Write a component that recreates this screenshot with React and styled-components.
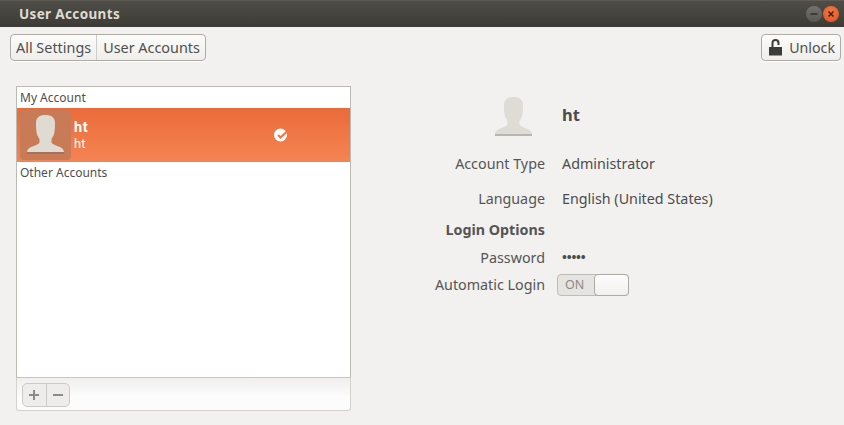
import React from 'react';
import styled, { createGlobalStyle } from 'styled-components';

const GlobalStyle = createGlobalStyle`
  html, body { margin: 0; padding: 0; }
  body {
    width: 844px;
    height: 425px;
    overflow: hidden;
    background: #f2f1f0;
    font-family: "Noto Sans", "Open Sans", sans-serif;
    font-size: 14.3px;
    color: #4c4c4c;
  }
`;

const Window = styled.div`
  width: 844px;
  height: 425px;
  display: flex;
  flex-direction: column;
`;

const TitleBar = styled.div`
  height: 27px;
  flex: none;
  display: flex;
  align-items: center;
  justify-content: space-between;
  padding: 0 5px 0 19px;
  box-sizing: border-box;
  background: linear-gradient(#504d47, #3c3b37);
  border-top: 1px solid #5e5b55;
`;

const Title = styled.div`
  font-size: 13.5px;
  font-weight: 700;
  letter-spacing: 0.35px;
  color: #dfdbd2;
`;

const WindowButtons = styled.div`
  display: flex;
  gap: 1px;
`;

const WindowButton = styled.div`
  width: 16px;
  height: 16px;
  border-radius: 50%;
  display: flex;
  align-items: center;
  justify-content: center;
  background: ${p => (p.$close ? 'radial-gradient(circle at 50% 35%, #f07a45, #e2501e)' : 'linear-gradient(#73726d, #585752)')};
`;

const Toolbar = styled.div`
  height: 59px;
  flex: none;
  display: flex;
  justify-content: space-between;
  align-items: flex-start;
  padding: 7px 3px 0 10px;
  box-sizing: border-box;
`;

const ButtonGroup = styled.div`
  display: flex;
  height: 27px;
  box-sizing: border-box;
  border: 1px solid #aeaaa4;
  border-radius: 4px;
  background: linear-gradient(#fbfbfa, #efeeec);
  box-shadow: 0 1px 0 #fff;
`;

const CrumbButton = styled.div`
  display: flex;
  align-items: center;
  gap: 7px;
  padding: 0 5px 0 ${p => (p.$first ? '5px' : '6px')};
  font-size: 14.4px;
  color: #4f4f4f;
  & + & { border-left: 1px solid #cfccc8; }
`;

const UnlockButton = styled(CrumbButton)`
  padding-left: 7px;
  font-size: 14.2px;
`;

const Main = styled.div`
  flex: 1;
  display: flex;
  padding-left: 16px;
`;

const AccountsPanel = styled.div`
  width: 335px;
  height: 325px;
  flex: none;
  display: flex;
  flex-direction: column;
`;

const AccountList = styled.div`
  height: 292px;
  flex: none;
  box-sizing: border-box;
  background: #fff;
  border: 1px solid #bdb9b3;
  border-bottom-color: #c8c5c0;
`;

const GroupHeading = styled.div`
  height: 21px;
  padding-left: 3px;
  font-size: 12px;
  line-height: 21px;
  color: #4f4f4f;
`;

const AccountRow = styled.div`
  height: 54px;
  display: flex;
  align-items: center;
  background: linear-gradient(#ea6b39, #f58454);
  color: #fff;
`;

const AvatarTile = styled.div`
  width: 51px;
  height: 50px;
  margin-left: 3px;
  flex: none;
  border-radius: 4px;
  background: #c97a57;
  display: flex;
  align-items: center;
  justify-content: center;
`;

const AccountText = styled.div`
  margin-left: 3px;
  padding-top: 2px;
  width: 200px;
  display: flex;
  flex-direction: column;
  font-family: Roboto, "Noto Sans", sans-serif;
  font-size: 13px;
  line-height: 16.5px;
`;

const AccountName = styled.span`
  font-weight: 700;
  font-size: 14.5px;
  letter-spacing: 0.6px;
`;

const ListFooter = styled.div`
  flex: 1;
  box-sizing: border-box;
  padding: 5px 0 0 5px;
  border: 1px solid #d5d2ce;
  border-top: 0;
  border-radius: 0 0 3px 3px;
  background: linear-gradient(#f0efee, #fcfcfc 60%);
`;

const SmallGroup = styled.div`
  width: 48px;
  height: 24px;
  box-sizing: border-box;
  display: flex;
  border: 1px solid #cdcac6;
  border-radius: 5px;
  background: #eeedeb;
`;

const SmallButton = styled.div`
  flex: 1;
  display: flex;
  align-items: center;
  justify-content: center;
  & + & { border-left: 1px solid #cdcac6; }
`;

const Details = styled.div`
  display: grid;
  grid-template-columns: 194px auto;
  grid-template-rows: 50px 48px 22px 40px 16px 38px;
  column-gap: 12px;
  align-items: center;
  align-content: start;
  padding-top: 3px;
  height: max-content;
`;

const Label = styled.div`
  text-align: right;
  font-size: 14.3px;
  color: #555;
  font-weight: ${p => (p.$bold ? 700 : 400)};
`;

const Value = styled.div`
  padding-left: 5px;
  font-size: 14.3px;
  color: #4c4c4c;
`;

const AvatarCell = styled.div`
  display: flex;
  justify-content: flex-end;
  padding-right: 12px;
  padding-top: 5px;
`;

const DetailName = styled(Value)`
  font-size: 16.5px;
  font-weight: 700;
`;

const Dots = styled(Value)`
  font-size: 13px;
  font-weight: 700;
  letter-spacing: -0.2px;
`;

const Switch = styled.div`
  width: 72px;
  height: 22px;
  margin-top: 1px;
  box-sizing: border-box;
  display: flex;
  align-items: center;
  justify-content: space-between;
  border: 1px solid #bfbcb7;
  border-radius: 4px;
  background: #e6e4e1;
  font-size: 12.5px;
  color: #8c8a86;
  padding-left: 7px;
`;

const SwitchKnob = styled.div`
  width: 35px;
  height: 22px;
  margin-right: -1px;
  box-sizing: border-box;
  border: 1px solid #aeaaa4;
  border-radius: 4px;
  background: linear-gradient(#fdfdfd, #f1f0ee);
`;

const Person = ({ fill, shade }) => (
  <svg width="38" height="40" viewBox="0 0 38 40">
    <path
      fill={fill}
      d="M18.500 0C12.500 0 9 2.500 9 8c0 3 .1 6.500.6 9.500.5 3 1.900 5 2.900 6.500v3c0 1.500-2 2.500-5 3.700C3.500 32 .5 33 0 37h37c-.5-4-3.500-5-7.500-6.300-3-1.200-5-2.200-5-3.700v-3c1-1.500 2.400-3.500 2.900-6.500.5-3 .6-6.500.6-9.500C28 2.500 24.500 0 18.500 0z"
    />
    <rect x="0" y="37" width="37" height="2" fill={shade} />
  </svg>
);

const LockIcon = () => (
  <svg width="13" height="17" viewBox="0 0 13 17">
    <path d="M0 8h13v8.500H0z" fill="#3c3c3c" />
    <path d="M3.500 8V4C3.500 2.200 4.700 1 6.500 1S9.500 2.200 9.500 4v2" fill="none" stroke="#3c3c3c" strokeWidth="2" />
  </svg>
);

const CheckBadge = () => (
  <svg width="14" height="14" viewBox="0 0 14 14">
    <circle cx="6.500" cy="7" r="6.500" fill="#fff" />
    <path d="M4 7l2.500 2.500L13.500 3" fill="none" stroke="#ef7644" strokeWidth="2" />
  </svg>
);

const WindowGlyph = ({ close }) => (
  <svg width="10" height="10" viewBox="0 0 10 10">
    {close ? (
      <path d="M2.500 2.500l5 5M7.500 2.500l-5 5" stroke="#4a1a08" strokeWidth="1.500" />
    ) : (
      <path d="M1.500 5h7" stroke="#32312e" strokeWidth="1.500" />
    )}
  </svg>
);

const PlusMinus = ({ minus }) => (
  <svg width="12" height="12" viewBox="0 0 12 12">
    <path d={minus ? 'M1 6h10' : 'M1 6h10M6 1v10'} stroke="#8e8b86" strokeWidth="2" />
  </svg>
);

export default function App() {
  return (
    <Window>
      <GlobalStyle />
      <TitleBar>
        <Title>User Accounts</Title>
        <WindowButtons>
          <WindowButton><WindowGlyph /></WindowButton>
          <WindowButton $close><WindowGlyph close /></WindowButton>
        </WindowButtons>
      </TitleBar>
      <Toolbar>
        <ButtonGroup>
          <CrumbButton $first>All Settings</CrumbButton>
          <CrumbButton>User Accounts</CrumbButton>
        </ButtonGroup>
        <ButtonGroup>
          <UnlockButton><LockIcon />Unlock</UnlockButton>
        </ButtonGroup>
      </Toolbar>
      <Main>
        <AccountsPanel>
          <AccountList>
            <GroupHeading>My Account</GroupHeading>
            <AccountRow>
              <AvatarTile><Person fill="#dfdbd2" shade="#a8705a" /></AvatarTile>
              <AccountText>
                <AccountName>ht</AccountName>
                <span>ht</span>
              </AccountText>
              <CheckBadge />
            </AccountRow>
            <GroupHeading>Other Accounts</GroupHeading>
          </AccountList>
          <ListFooter>
            <SmallGroup>
              <SmallButton><PlusMinus /></SmallButton>
              <SmallButton><PlusMinus minus /></SmallButton>
            </SmallGroup>
          </ListFooter>
        </AccountsPanel>
        <Details>
          <AvatarCell><Person fill="#dfdbd5" shade="#b9b6b0" /></AvatarCell>
          <DetailName>ht</DetailName>
          <Label>Account Type</Label>
          <Value>Administrator</Value>
          <Label>Language</Label>
          <Value>English (United States)</Value>
          <Label $bold>Login Options</Label>
          <span />
          <Label>Password</Label>
          <Dots>•••••</Dots>
          <Label>Automatic Login</Label>
          <Switch>ON<SwitchKnob /></Switch>
        </Details>
      </Main>
    </Window>
  );
}
